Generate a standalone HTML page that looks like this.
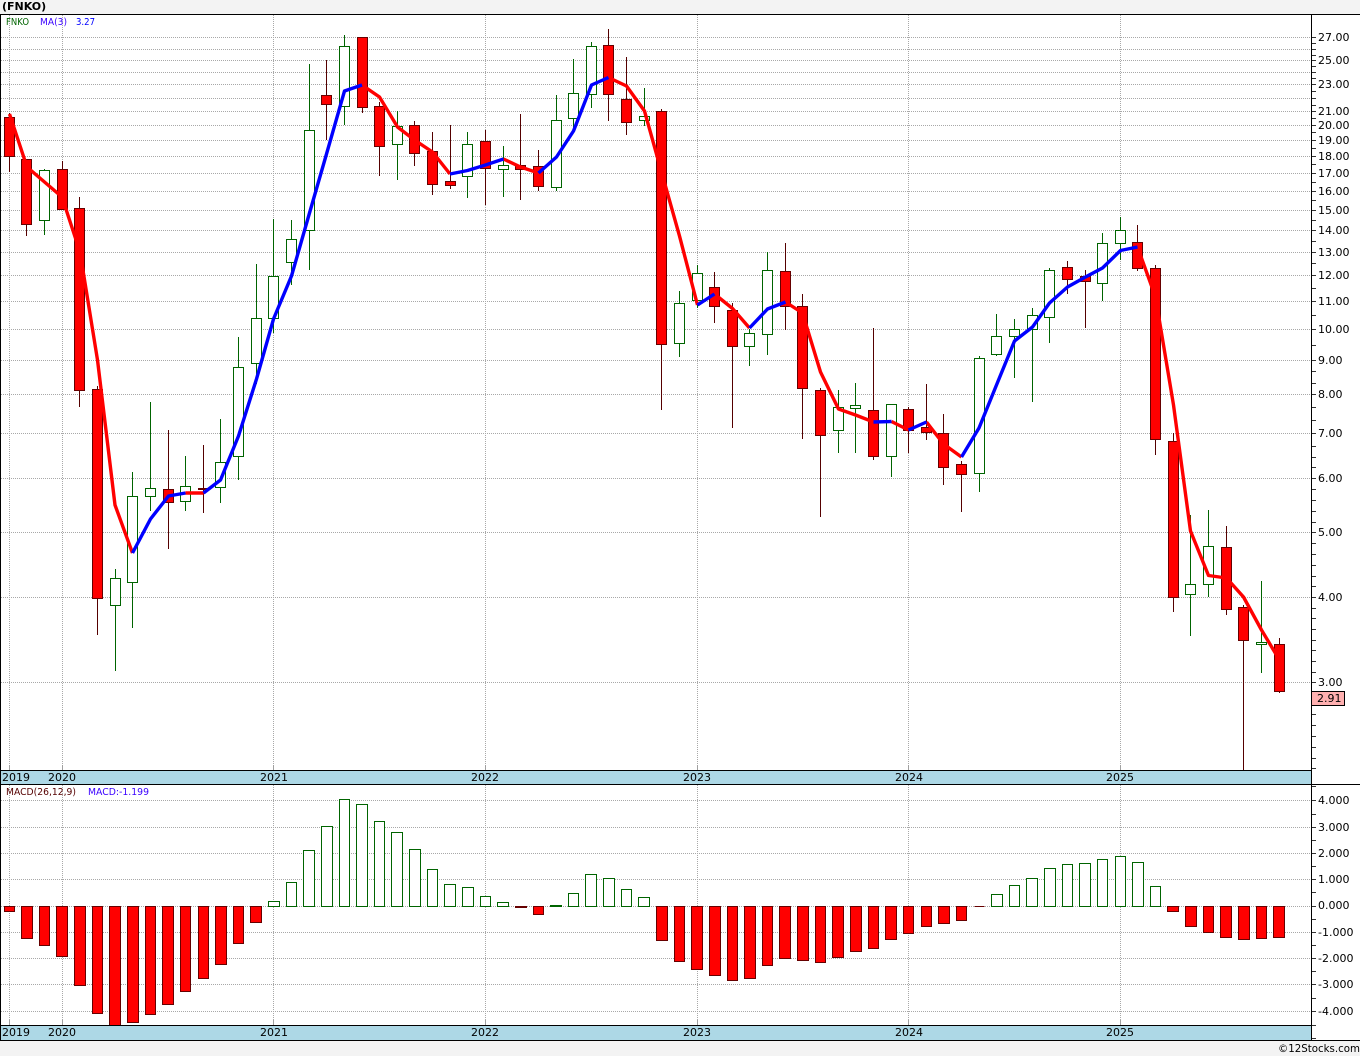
<!DOCTYPE html>
<html>
<head>
<meta charset="utf-8">
<title>(FNKO)</title>
<style>
html,body{margin:0;padding:0;background:#f3f3f3;width:1360px;height:1056px;overflow:hidden}
svg{display:block}
text{font-family:"DejaVu Sans","Liberation Sans",sans-serif;font-size:11px;fill:#000}
.c{shape-rendering:crispEdges}
.g{stroke:#a8a8a8;stroke-width:1;stroke-dasharray:1 1;fill:none;shape-rendering:crispEdges}
.rw{stroke:#550000;stroke-width:1;fill:none;shape-rendering:crispEdges}
.gw{stroke:#006400;stroke-width:1;fill:none;shape-rendering:crispEdges}
.rb{stroke:#660000;stroke-width:1;fill:#ff0000;shape-rendering:crispEdges}
.gb{stroke:#006400;stroke-width:1;fill:#ffffff;shape-rendering:crispEdges}
.mr{stroke:#ff0000;stroke-width:3.4;fill:none;stroke-linejoin:round}
.mb{stroke:#0000ff;stroke-width:3.4;fill:none;stroke-linejoin:round}
.sm{font-size:10px}
</style>
</head>
<body>
<svg xmlns="http://www.w3.org/2000/svg" width="1360" height="1056" viewBox="0 0 1360 1056">
<rect x="0" y="0" width="1360" height="1056" fill="#f3f3f3"/>
<rect x="0" y="14" width="1360" height="1027" fill="#ffffff"/>
<text x="2" y="10" style="font-weight:bold">(FNKO)</text>

<!-- horizontal grid, price -->
<path class="g" d="M1 37.5H1311M1 49.5H1311M1 60.5H1311M1 72.5H1311M1 84.5H1311M1 98.5H1311M1 111.5H1311M1 125.5H1311M1 140.5H1311M1 156.5H1311M1 173.5H1311M1 191.5H1311M1 210.5H1311M1 230.5H1311M1 252.5H1311M1 275.5H1311M1 301.5H1311M1 329.5H1311M1 360.5H1311M1 394.5H1311M1 433.5H1311M1 478.5H1311M1 532.5H1311M1 597.5H1311M1 682.5H1311"/>
<!-- horizontal grid, macd -->
<path class="g" d="M1 800.5H1311M1 827.5H1311M1 853.5H1311M1 879.5H1311M1 906.5H1311M1 932.5H1311M1 958.5H1311M1 984.5H1311M1 1011.5H1311"/>
<!-- vertical grid -->
<path class="g" d="M9.5 15V765M62.5 15V765M273.5 15V765M485.5 15V765M697.5 15V765M908.5 15V765M1120.5 15V765M9.5 785V1020M62.5 785V1020M273.5 785V1020M485.5 785V1020M697.5 785V1020M908.5 785V1020M1120.5 785V1020"/>
<path class="c" stroke="#a0a0a0" fill="none" d="M9.5 765V770M62.5 765V770M273.5 765V770M485.5 765V770M697.5 765V770M908.5 765V770M1120.5 765V770M9.5 1020V1025M62.5 1020V1025M273.5 1020V1025M485.5 1020V1025M697.5 1020V1025M908.5 1020V1025M1120.5 1020V1025"/>

<!-- red wicks -->
<path class="rw" d="M9.5 113V172M26.5 159V236M62.5 161V210M79.5 197V407M97.5 386V635M168.5 430V549M203.5 445V513M326.5 60V140M362.5 37V113M379.5 102V176M414.5 121V166M432.5 132V195M450.5 125V189M485.5 130V205M520.5 114V200M538.5 150V191M608.5 29V121M626.5 57V135M661.5 109V410M714.5 272V323M732.5 303V428M785.5 243V330M802.5 294V439M820.5 388V517M873.5 328V460M908.5 407V453M926.5 384V440M943.5 414V485M961.5 461V512M1067.5 261V294M1085.5 270V328M1137.5 225V271M1155.5 265V455M1173.5 433V612M1226.5 526V615M1243.5 605V770M1279.5 638V693"/>
<!-- green wicks -->
<path class="gw" d="M44.5 169V235M115.5 569V671M132.5 472V628M150.5 402V511M185.5 456V511M220.5 419V503M238.5 337V480M256.5 264V384M273.5 219V333M291.5 220V285M309.5 64V270M344.5 35V125M397.5 111V180M467.5 132V198M503.5 146V197M556.5 95V191M573.5 59V130M591.5 42V108M644.5 88V126M679.5 291V357M697.5 265V308M749.5 329V366M767.5 252V355M838.5 390V453M855.5 383V453M891.5 404V477M979.5 356V492M996.5 314V356M1014.5 319V378M1032.5 308V402M1049.5 268V343M1102.5 233V301M1120.5 217V260M1190.5 515V636M1208.5 510V597M1261.5 581V673"/>
<!-- red boxes -->
<path class="rb" d="M4.5 117.5h10v39h-10zM21.5 159.5h10v65h-10zM57.5 169.5h10v40h-10zM74.5 208.5h10v182h-10zM92.5 389.5h10v209h-10zM163.5 489.5h10v13h-10zM198.5 488.5h10v1h-10zM321.5 95.5h10v9h-10zM357.5 37.5h10v70h-10zM374.5 106.5h10v40h-10zM409.5 125.5h10v28h-10zM427.5 151.5h10v33h-10zM445.5 181.5h10v4h-10zM480.5 141.5h10v27h-10zM515.5 165.5h10v4h-10zM533.5 166.5h10v20h-10zM603.5 45.5h10v49h-10zM621.5 99.5h10v23h-10zM656.5 111.5h10v233h-10zM709.5 287.5h10v19h-10zM727.5 310.5h10v36h-10zM780.5 271.5h10v35h-10zM797.5 306.5h10v82h-10zM815.5 390.5h10v45h-10zM868.5 410.5h10v46h-10zM903.5 409.5h10v21h-10zM921.5 427.5h10v5h-10zM938.5 433.5h10v34h-10zM956.5 464.5h10v10h-10zM1062.5 267.5h10v12h-10zM1080.5 276.5h10v5h-10zM1132.5 242.5h10v26h-10zM1150.5 268.5h10v171h-10zM1168.5 441.5h10v156h-10zM1221.5 547.5h10v62h-10zM1238.5 607.5h10v33h-10zM1274.5 644.5h10v47h-10z"/>
<!-- green boxes -->
<path class="gb" d="M39.5 170.5h10v50h-10zM110.5 578.5h10v27h-10zM127.5 496.5h10v86h-10zM145.5 488.5h10v8h-10zM180.5 486.5h10v15h-10zM215.5 462.5h10v25h-10zM233.5 367.5h10v89h-10zM251.5 318.5h10v45h-10zM268.5 276.5h10v42h-10zM286.5 239.5h10v23h-10zM304.5 130.5h10v100h-10zM339.5 46.5h10v60h-10zM392.5 126.5h10v18h-10zM462.5 144.5h10v32h-10zM498.5 165.5h10v4h-10zM551.5 120.5h10v67h-10zM568.5 93.5h10v25h-10zM586.5 46.5h10v48h-10zM639.5 116.5h10v4h-10zM674.5 303.5h10v40h-10zM692.5 273.5h10v27h-10zM744.5 333.5h10v13h-10zM762.5 270.5h10v64h-10zM833.5 407.5h10v23h-10zM850.5 405.5h10v3h-10zM886.5 404.5h10v52h-10zM974.5 358.5h10v115h-10zM991.5 336.5h10v18h-10zM1009.5 329.5h10v7h-10zM1027.5 315.5h10v14h-10zM1044.5 270.5h10v47h-10zM1097.5 243.5h10v40h-10zM1115.5 230.5h10v13h-10zM1185.5 584.5h10v10h-10zM1203.5 546.5h10v38h-10zM1256.5 642.5h10v2h-10z"/>

<!-- moving average -->
<g>
<polyline class="mr" points="9.5,114 27,167 44.5,182 62,197 80,252 97.5,360 115,505 132.5,553"/>
<polyline class="mr" points="185.5,493 203.5,493"/>
<polyline class="mr" points="362,85 379.5,97 397.5,127 414.5,140 432.5,152 450,174"/>
<polyline class="mr" points="503.5,159 520.5,167 538.5,173"/>
<polyline class="mr" points="608.5,77.5 626.5,86 644.5,111 661.5,172 679.5,236 697.5,305"/>
<polyline class="mr" points="714.5,294 732.5,308.5 749.5,328"/>
<polyline class="mr" points="785.5,302 802.5,313 820.5,372 838.5,409 855.5,415 873.5,422"/>
<polyline class="mr" points="891.5,421.5 908.5,430"/>
<polyline class="mr" points="926.5,422 943.5,444 961.5,457"/>
<polyline class="mr" points="1137.5,247 1155.5,297 1173.5,405 1190.5,531 1208.5,575.5 1226.5,578 1243.5,597 1261.5,630 1279.5,660"/>
<polyline class="mb" points="132.5,553 150.5,519 168.5,496 185.5,493"/>
<polyline class="mb" points="203.5,493 220.5,480 238.5,436 256.5,379 273.5,319 291.5,276 309.5,213 326.5,154 344.5,91 362,85"/>
<polyline class="mb" points="450,174 467.5,170.5 485.5,165 503.5,159"/>
<polyline class="mb" points="538.5,173 556.5,157 573.5,131 591.5,85 608.5,77.5"/>
<polyline class="mb" points="697.5,305 714.5,294"/>
<polyline class="mb" points="749.5,328 767.5,309 785.5,302"/>
<polyline class="mb" points="873.5,422 891.5,421.5"/>
<polyline class="mb" points="908.5,430 926.5,422"/>
<polyline class="mb" points="961.5,457 979,428 996.5,385 1014.5,341 1032.5,327 1049.5,303 1067.5,287 1085.5,277 1102.5,268 1120.5,250.5 1137.5,247"/>
</g>

<!-- MACD bars -->
<path class="rb" d="M4.5 906.5h10v5h-10zM21.5 906.5h11v32h-11zM39.5 906.5h10v39h-10zM56.5 906.5h11v50h-11zM74.5 906.5h11v79h-11zM92.5 906.5h10v107h-10zM109.5 906.5h11v119h-11zM127.5 906.5h11v116h-11zM145.5 906.5h10v108h-10zM162.5 906.5h11v98h-11zM180.5 906.5h10v85h-10zM198.5 906.5h10v72h-10zM215.5 906.5h11v58h-11zM233.5 906.5h10v37h-10zM250.5 906.5h11v16h-11zM515.5 906.5h11v1h-11zM533.5 906.5h10v8h-10zM656.5 906.5h11v34h-11zM674.5 906.5h10v55h-10zM691.5 906.5h11v63h-11zM709.5 906.5h11v69h-11zM727.5 906.5h10v74h-10zM744.5 906.5h11v72h-11zM762.5 906.5h10v59h-10zM779.5 906.5h11v52h-11zM797.5 906.5h11v54h-11zM815.5 906.5h10v56h-10zM832.5 906.5h11v51h-11zM850.5 906.5h11v45h-11zM868.5 906.5h10v42h-10zM885.5 906.5h11v33h-11zM903.5 906.5h10v27h-10zM921.5 906.5h10v20h-10zM938.5 906.5h11v17h-11zM956.5 906.5h10v14h-10zM974.5 906.5h10v0h-10zM1167.5 906.5h11v5h-11zM1185.5 906.5h11v20h-11zM1203.5 906.5h10v26h-10zM1220.5 906.5h11v31h-11zM1238.5 906.5h11v33h-11zM1256.5 906.5h10v32h-10zM1273.5 906.5h11v31h-11z"/>
<path class="gb" d="M268.5 906.5h11v-5h-11zM286.5 906.5h10v-24h-10zM303.5 906.5h11v-56h-11zM321.5 906.5h11v-80h-11zM339.5 906.5h10v-107h-10zM356.5 906.5h11v-102h-11zM374.5 906.5h10v-85h-10zM391.5 906.5h11v-74h-11zM409.5 906.5h11v-57h-11zM427.5 906.5h10v-37h-10zM444.5 906.5h11v-22h-11zM462.5 906.5h11v-19h-11zM480.5 906.5h10v-10h-10zM497.5 906.5h11v-4h-11zM550.5 906.5h11v-1h-11zM568.5 906.5h10v-13h-10zM585.5 906.5h11v-32h-11zM603.5 906.5h11v-28h-11zM621.5 906.5h10v-17h-10zM638.5 906.5h11v-9h-11zM991.5 906.5h11v-12h-11zM1009.5 906.5h10v-21h-10zM1026.5 906.5h11v-28h-11zM1044.5 906.5h11v-38h-11zM1062.5 906.5h10v-42h-10zM1079.5 906.5h11v-43h-11zM1097.5 906.5h10v-47h-10zM1115.5 906.5h10v-50h-10zM1132.5 906.5h11v-44h-11zM1150.5 906.5h10v-20h-10z"/>

<!-- time bands -->
<rect class="c" x="0" y="771" width="1311" height="13" fill="#add8e6"/>
<rect class="c" x="0" y="1026" width="1311" height="14" fill="#add8e6"/>
<path class="c" stroke="#000" fill="none" d="M0 14.5H1360M0 770.5H1311M0 784.5H1360M0 1025.5H1311M0 1040.5H1360M.5 14V1041M1311.5 14V1041"/>

<!-- ticks -->
<path class="c" stroke="#333" fill="none" d="M1312 37.5h4M1312 43.5h4M1312 49.5h4M1312 55.5h4M1312 60.5h4M1312 66.5h4M1312 72.5h4M1312 78.5h4M1312 84.5h4M1312 91.5h4M1312 98.5h4M1312 105.5h4M1312 111.5h4M1312 118.5h4M1312 125.5h4M1312 132.5h4M1312 140.5h4M1312 148.5h4M1312 156.5h4M1312 164.5h4M1312 173.5h4M1312 182.5h4M1312 191.5h4M1312 200.5h4M1312 210.5h4M1312 220.5h4M1312 230.5h4M1312 241.5h4M1312 252.5h4M1312 263.5h4M1312 275.5h4M1312 288.5h4M1312 301.5h4M1312 315.5h4M1312 329.5h4M1312 345.5h4M1312 360.5h4M1312 371.5h4M1312 383.5h4M1312 394.5h4M1312 407.5h4M1312 420.5h4M1312 433.5h4M1312 446.5h4M1312 457.5h4M1312 467.5h4M1312 478.5h4M1312 489.5h4M1312 500.5h4M1312 511.5h4M1312 522.5h4M1312 532.5h4M1312 543.5h4M1312 554.5h4M1312 565.5h4M1312 576.5h4M1312 586.5h4M1312 597.5h4M1312 608.5h4M1312 618.5h4M1312 629.5h4M1312 640.5h4M1312 650.5h4M1312 661.5h4M1312 672.5h4M1312 682.5h4M1312 693.5h4M1312 704.5h4M1312 714.5h4M1312 725.5h4M1312 736.5h4M1312 747.5h4M1312 758.5h4M1312 768.5h4M1312 786.5h4M1312 800.5h4M1312 814.5h4M1312 827.5h4M1312 840.5h4M1312 853.5h4M1312 866.5h4M1312 879.5h4M1312 892.5h4M1312 906.5h4M1312 919.5h4M1312 932.5h4M1312 945.5h4M1312 958.5h4M1312 971.5h4M1312 984.5h4M1312 998.5h4M1312 1011.5h4M1312 1025.5h4M1312 1038.5h4"/>

<!-- price labels -->
<g>
<text x="1318" y="41">27.00</text>
<text x="1318" y="64">25.00</text>
<text x="1318" y="88">23.00</text>
<text x="1318" y="115">21.00</text>
<text x="1318" y="129">20.00</text>
<text x="1318" y="144">19.00</text>
<text x="1318" y="160">18.00</text>
<text x="1318" y="177">17.00</text>
<text x="1318" y="195">16.00</text>
<text x="1318" y="214">15.00</text>
<text x="1318" y="234">14.00</text>
<text x="1318" y="256">13.00</text>
<text x="1318" y="279">12.00</text>
<text x="1318" y="305">11.00</text>
<text x="1318" y="333">10.00</text>
<text x="1318" y="364">9.00</text>
<text x="1318" y="398">8.00</text>
<text x="1318" y="437">7.00</text>
<text x="1318" y="482">6.00</text>
<text x="1318" y="536">5.00</text>
<text x="1318" y="601">4.00</text>
<text x="1318" y="686">3.00</text>
</g>
<rect class="c" x="1311.5" y="691.5" width="33" height="14" fill="#ffb0b0" stroke="#000"/>
<text x="1317" y="702">2.91</text>

<!-- macd labels -->
<g>
<text x="1318" y="804">4.000</text>
<text x="1318" y="831">3.000</text>
<text x="1318" y="857">2.000</text>
<text x="1318" y="883">1.000</text>
<text x="1318" y="909">0.000</text>
<text x="1318" y="936">-1.000</text>
<text x="1318" y="962">-2.000</text>
<text x="1318" y="988">-3.000</text>
<text x="1318" y="1015">-4.000</text>
</g>

<!-- year labels -->
<g>
<text x="2" y="781">2019</text>
<text x="48" y="781">2020</text>
<text x="260" y="781">2021</text>
<text x="471" y="781">2022</text>
<text x="683" y="781">2023</text>
<text x="895" y="781">2024</text>
<text x="1106" y="781">2025</text>
<text x="2" y="1036">2019</text>
<text x="48" y="1036">2020</text>
<text x="260" y="1036">2021</text>
<text x="471" y="1036">2022</text>
<text x="683" y="1036">2023</text>
<text x="895" y="1036">2024</text>
<text x="1106" y="1036">2025</text>
</g>

<!-- legends -->
<text class="sm" x="6" y="25" textLength="23" lengthAdjust="spacingAndGlyphs" style="fill:#006400">FNKO</text>
<text class="sm" x="40" y="25" textLength="27" lengthAdjust="spacingAndGlyphs" style="fill:#3a00ff">MA(3)</text>
<text class="sm" x="76" y="25" textLength="19" lengthAdjust="spacingAndGlyphs" style="fill:#0000ff">3.27</text>
<text class="sm" x="6" y="795" textLength="70" lengthAdjust="spacingAndGlyphs" style="fill:#550000">MACD(26,12,9)</text>
<text class="sm" x="88" y="795" textLength="61" lengthAdjust="spacingAndGlyphs" style="fill:#3a00ff">MACD:-1.199</text>

<text x="1278" y="1052" textLength="82" lengthAdjust="spacingAndGlyphs">©12Stocks.com</text>
</svg>
</body>
</html>
